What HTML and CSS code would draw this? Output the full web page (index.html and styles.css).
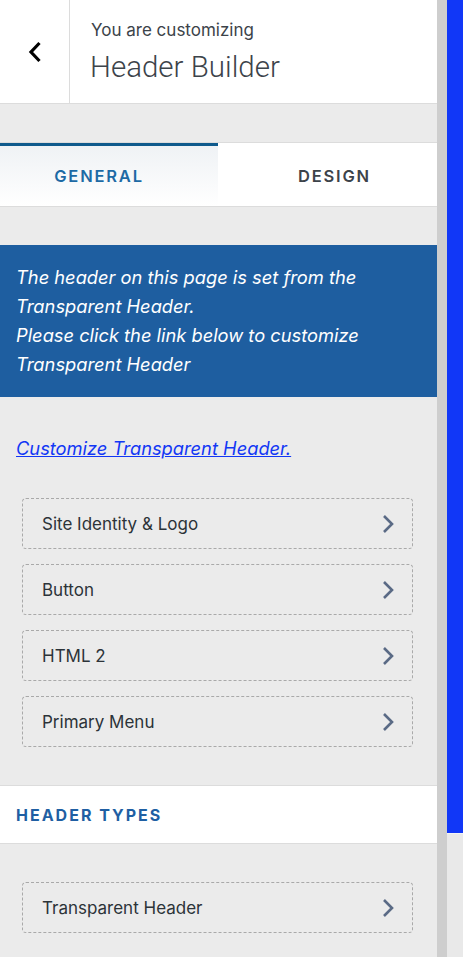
FILE: index.html
```html
<!DOCTYPE html>
<html lang="en">

<head>
    <meta charset="UTF-8">
    <title>Customizer - Header Builder</title>
    <link rel="stylesheet" href="styles.css">
</head>

<body>
    <div class="frame">
        <aside class="panel">
            <header class="panel-head">
                <button class="back" aria-label="Back">
                    <svg width="16" height="24" viewBox="0 0 16 24">
                        <path d="M12.5 3 L4 12 L12.5 21" fill="none" stroke="#000" stroke-width="3.2"/>
                    </svg>
                </button>
                <div class="title">
                    <span class="title-small">You are customizing</span>
                    <span class="title-big">Header Builder</span>
                </div>
            </header>

            <div class="spacer"></div>

            <nav class="tabs">
                <a class="tab active">GENERAL</a>
                <a class="tab">DESIGN</a>
            </nav>

            <div class="notice">
                The header on this page is set from the<br>
                Transparent Header.<br>
                Please click the link below to customize<br>
                Transparent Header
            </div>

            <a class="notice-link" href="#">Customize Transparent Header.</a>

            <ul class="items">
                <li class="item">Site Identity &amp; Logo
                    <svg class="chev" width="12" height="20" viewBox="0 0 12 20"><path d="M2 2 L10 10 L2 18"/></svg>
                </li>
                <li class="item">Button
                    <svg class="chev" width="12" height="20" viewBox="0 0 12 20"><path d="M2 2 L10 10 L2 18"/></svg>
                </li>
                <li class="item">HTML 2
                    <svg class="chev" width="12" height="20" viewBox="0 0 12 20"><path d="M2 2 L10 10 L2 18"/></svg>
                </li>
                <li class="item">Primary Menu
                    <svg class="chev" width="12" height="20" viewBox="0 0 12 20"><path d="M2 2 L10 10 L2 18"/></svg>
                </li>
            </ul>

            <h3 class="section-title">HEADER TYPES</h3>

            <ul class="items items-types">
                <li class="item">Transparent Header
                    <svg class="chev" width="12" height="20" viewBox="0 0 12 20"><path d="M2 2 L10 10 L2 18"/></svg>
                </li>
            </ul>
        </aside>

        <div class="scrollbar"></div>

        <div class="preview">
            <div class="preview-bar"></div>
        </div>
    </div>
</body>

</html>
```

FILE: styles.css
```css
body {
    margin: 0;
    font-family: Inter, "Liberation Sans", sans-serif;
    background: #ebebeb;
}

.frame {
    display: flex;
    height: 957px;
    overflow: hidden;
}

.panel {
    width: 437px;
    flex-shrink: 0;
    background: #ebebeb;
}

.scrollbar {
    width: 10px;
    flex-shrink: 0;
    background: #cecece;
}

.preview {
    flex: 1;
    background: #e9e9e9;
}

.preview-bar {
    height: 833px;
    background: #1137f7;
    border-bottom: 1px solid #f4f4f4;
}

/* header */

.panel-head {
    display: flex;
    height: 103px;
    background: #fff;
    border-bottom: 1px solid #dcdcdc;
}

.back {
    width: 70px;
    border: 0;
    border-right: 1px solid #dcdcdc;
    background: #fff;
    padding: 0;
    display: flex;
    align-items: center;
    justify-content: center;
}

.title {
    display: flex;
    flex-direction: column;
    padding: 18px 0 0 21px;
}

.title-small {
    font-size: 17px;
    color: #3c434a;
    line-height: 24px;
}

.title-big {
    font-family: Roboto, "Liberation Sans", sans-serif;
    font-size: 29.5px;
    font-weight: 300;
    color: #3c434a;
    line-height: 50px;
    margin-left: -1px;
}

.spacer {
    height: 38px;
}

/* tabs */

.tabs {
    display: grid;
    grid-template-columns: 218px 1fr;
    border-top: 1px solid #dcdcdc;
    border-bottom: 1px solid #dcdcdc;
    background: #fff;
}

.tab {
    height: 60px;
    display: flex;
    align-items: center;
    justify-content: center;
    font-size: 16.5px;
    font-weight: 600;
    letter-spacing: 1.8px;
    color: #3c434a;
    border-top: 3px solid transparent;
}

.tab.active {
    color: #1d6aa5;
    border-top-color: #0f5a8c;
    background: linear-gradient(#eff2f5, #fff);
    padding-right: 20px;
}

.tab:last-child {
    padding-left: 14px;
}

/* notice */

.notice {
    margin-top: 38px;
    background: #1e5ea0;
    color: #fff;
    font-style: italic;
    font-size: 18.3px;
    line-height: 29px;
    padding: 18px 16px 18px;
}

.notice-link {
    display: block;
    margin: 38px 16px 0;
    font-size: 18.3px;
    font-style: italic;
    color: #1237f5;
    line-height: 26px;
}

/* items */

.items {
    list-style: none;
    margin: 0;
    padding: 37px 24px 38px 22px;
    display: flex;
    flex-direction: column;
    gap: 15px;
}

.items-types {
    padding-top: 38px;
}

.item {
    height: 49px;
    border: 1px dashed #a9a9a9;
    border-radius: 4px;
    display: flex;
    align-items: center;
    justify-content: space-between;
    padding: 0 18px 0 19px;
    font-size: 17px;
    color: #2c3338;
}

.chev {
    fill: none;
    stroke: #5a6a85;
    stroke-width: 2.6;
}

/* section */

.section-title {
    margin: 0;
    height: 57px;
    display: flex;
    align-items: center;
    padding-left: 16px;
    background: #fff;
    border-top: 1px solid #dcdcdc;
    border-bottom: 1px solid #dcdcdc;
    font-size: 16px;
    font-weight: 700;
    letter-spacing: 2px;
    color: #1f5fa3;
}
```
